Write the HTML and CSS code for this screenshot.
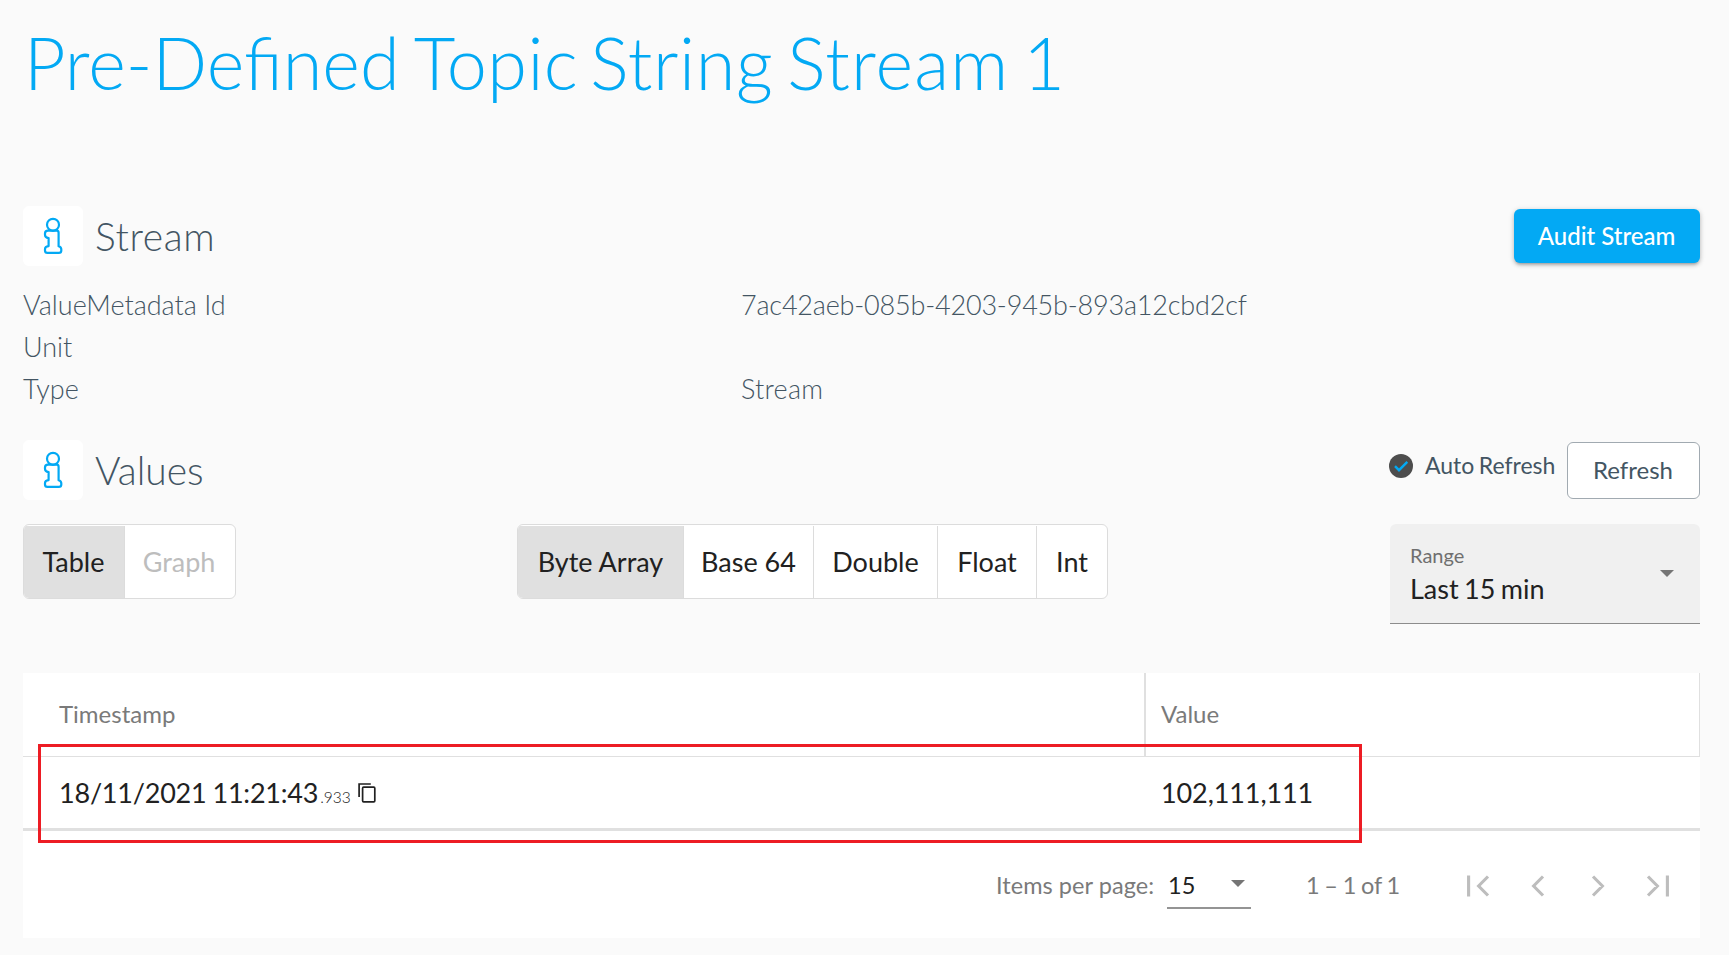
FILE: index.html
```html
<!DOCTYPE html>
<html lang="en">
<head>
<meta charset="utf-8">
<title>Pre-Defined Topic String Stream 1</title>
<link rel="stylesheet" href="styles.css">
</head>
<body>
<svg class="defs" width="0" height="0" aria-hidden="true">
  <symbol id="info" viewBox="0 0 60 60">
    <g fill="none" stroke="#03a9f4" stroke-width="2.2" stroke-linejoin="round">
      <circle cx="30" cy="18.8" r="6"/>
      <path d="M25 24.6H33.5Q35.6 24.6 35.6 26.8V40.3Q38.3 41 38.3 43.5V44.5Q38.3 46.9 35.8 46.9H24.4Q22 46.9 22 44.5V43Q22 40.5 25.6 40.1V32.2Q22 31.5 22 29V27.5Q22 24.6 25 24.6Z"/>
    </g>
  </symbol>
</svg>
<main class="page">
  <h1 class="title">Pre-Defined <span class="w-topic">Topic</span> <span class="w-string">String</span> <span class="w-stream">Stream</span> 1</h1>

  <section class="section-head">
    <svg class="tile"><use href="#info"/></svg>
    <h2 class="heading wide">Stream</h2>
    <button class="btn btn-primary">Audit Stream</button>
  </section>
  <dl class="details">
    <dt>ValueMetadata Id</dt><dd class="id">7ac42aeb-085b-4203-945b-893a12cbd2cf</dd>
    <dt>Unit</dt><dd></dd>
    <dt>Type</dt><dd class="type">Stream</dd>
  </dl>

  <section class="section-head values-head">
    <svg class="tile"><use href="#info"/></svg>
    <h2 class="heading">Values</h2>
    <label class="auto">
      <svg class="check" viewBox="0 0 24 24"><circle cx="12" cy="12" r="12" fill="#4d4d4d"/><path d="M6 12.2L10 16.2L18.3 7.9" fill="none" stroke="#03a9f4" stroke-width="2.4"/></svg>
      <span class="auto-text">Auto Refresh</span>
    </label>
    <button class="btn btn-outline">Refresh</button>
  </section>

  <section class="controls">
    <div class="toggle">
      <span class="opt opt-table on">Table</span><span class="opt opt-graph off">Graph</span>
    </div>
    <div class="toggle formats">
      <span class="opt opt-byte on">Byte Array</span><span class="opt opt-base">Base 64</span><span class="opt opt-double">Double</span><span class="opt opt-float">Float</span><span class="opt opt-int">Int</span>
    </div>
    <div class="select">
      <div class="select-text"><span class="select-label">Range</span><span class="select-value">Last 15 min</span></div>
      <span class="caret"></span>
    </div>
  </section>

  <section class="table">
    <div class="row header"><div class="cell time">Timestamp</div><div class="cell value">Value</div></div>
    <div class="row data">
      <div class="cell time"><span class="stamp">18/11/2021 11:21:43</span><span class="ms">.933</span>
        <svg class="copy" viewBox="0 0 18 20"><path d="M12.8 1H1.1V14" fill="none" stroke="#212121" stroke-width="1.7"/><rect x="4.6" y="4.2" width="12.2" height="14.6" rx="1" fill="none" stroke="#212121" stroke-width="1.7"/></svg>
      </div>
      <div class="cell value num">102,111,111</div>
    </div>
    <div class="paginator">
      <span class="per-page">Items per page:</span>
      <span class="size"><span class="size-num">15</span><span class="caret"></span></span>
      <span class="range">1 – 1 of 1</span>
      <svg class="nav" viewBox="0 0 204 24" fill="none" stroke="#bdbdbd" stroke-width="3.1">
        <path d="M2.6 1.5V22.5M22 2.5L12.6 12L22 21.5M77 2.5L67.6 12L77 21.5M127 2.5L136.4 12L127 21.5M182 2.5L191.4 12L182 21.5M201.4 1.5V22.5"/>
      </svg>
    </div>
    <div class="highlight"></div>
  </section>
</main>
</body>
</html>
```
FILE: styles.css
```css
* { box-sizing: border-box; }
body { margin: 0; background: #fafafa; font-family: Lato, "Open Sans", sans-serif; color: #212121; overflow: hidden; }
.defs { display: block; height: 0; }
.page { width: 1729px; height: 955px; padding: 0 29px 0 23px; }
.title { margin: 0; padding: 18px 0 0 1px; height: 206px; font-size: 72px; line-height: 88px; font-weight: 300; color: #03a9f4; white-space: nowrap; word-spacing: -5.5px; }
.w-topic { letter-spacing: .4px; margin-right: -2px; }
.w-string { letter-spacing: .6px; }
.w-stream { letter-spacing: 1.1px; }
.section-head { display: flex; height: 60px; align-items: flex-start; }
.tile { width: 60px; height: 60px; background: #fff; border-radius: 6px; flex: none; }
.heading { margin: 0 auto 0 12px; font-size: 39px; line-height: 60px; font-weight: 300; color: #435563; }
.wide { letter-spacing: .6px; }
.btn { font-family: inherit; border-radius: 6px; white-space: nowrap; }
.btn-primary { width: 186px; height: 54px; margin-top: 3px; padding: 0 1px 2px 0; border: 0; background: #03a9f4; color: #fff; font-size: 24px; font-weight: 500; box-shadow: 0 3px 3px -2px rgba(0,0,0,.2), 0 2px 4px rgba(0,0,0,.18), 0 1px 6px rgba(0,0,0,.12); }
.details { margin: 18px 0 0; display: grid; grid-template-columns: 718px 1fr; grid-auto-rows: 42px; font-size: 27px; line-height: 42px; font-weight: 300; color: #435563; }
.details dd { margin: 0; }
.id { letter-spacing: -.19px; }
.type { letter-spacing: .25px; }
.values-head { margin-top: 30px; }
.auto { display: flex; align-items: center; margin-top: 14px; height: 24px; font-size: 23px; color: #435563; }
.check { width: 24px; height: 24px; margin-right: 12px; }
.auto-text { width: 142px; padding-bottom: 2px; white-space: nowrap; word-spacing: -1.5px; }
.btn-outline { width: 133px; height: 57px; margin-top: 2px; padding: 0 1px 2px 0; background: #fff; border: 1px solid #a1aab1; color: #435563; font-size: 24px; }
.controls { display: flex; align-items: flex-start; margin-top: 24px; height: 149px; }
.toggle { display: flex; height: 75px; border: 1px solid #dcdcdc; border-radius: 6px; overflow: hidden; background: #fff; padding-top: 1px; font-size: 27px; line-height: 71px; }
.opt { text-align: center; white-space: nowrap; }
.opt + .opt { border-left: 1px solid #dcdcdc; }
.on { background: #e0e0e0; }
.off { color: #bdbdbd; }
.opt-table { width: 100px; padding-right: 1px; }
.opt-graph { width: 111px; padding-right: 2px; }
.formats { margin-left: 281px; }
.opt-byte { width: 165px; }
.opt-base { width: 130px; }
.opt-double { width: 124px; }
.opt-float { width: 99px; }
.opt-int { width: 71px; }
.select { display: flex; align-items: center; justify-content: space-between; width: 310px; height: 100px; margin-left: auto; padding: 0 26px 0 20px; border-radius: 6px 6px 0 0; border-bottom: 1px solid #8c8c8c; background: #f0f0f0; }
.select-text { display: flex; flex-direction: column; }
.select-label { font-size: 20px; line-height: 28px; color: #6f6f6f; padding-top: 2px; }
.select-value { font-size: 27px; line-height: 39px; word-spacing: -1.5px; }
.caret { width: 0; height: 0; border: 7.5px solid transparent; border-top-color: #757575; border-bottom: 0; }
.table { position: relative; height: 265px; background: #fff; }
.row { display: flex; }
.header { height: 84px; border-bottom: 1px solid #e0e0e0; border-right: 1px solid #e0e0e0; font-size: 24px; line-height: 82px; color: #7a7a7a; }
.cell { display: flex; align-items: center; padding-bottom: 2px; }
.data .cell { padding-bottom: 0; }
.time { width: 1123px; padding-left: 36px; }
.header .time { border-right: 2px solid #e0e0e0; }
.value { padding-left: 15px; }
.data { height: 74px; border-bottom: 3px solid #e0e0e0; font-size: 27px; line-height: 74px; }
.stamp { letter-spacing: -.22px; word-spacing: -.7px; }
.num { letter-spacing: -.1px; }
.ms { font-size: 15.5px; font-weight: 300; padding-top: 8px; margin-left: 2px; }
.copy { width: 18px; height: 20px; margin-left: 7px; }
.paginator { display: flex; align-items: center; height: 107px; padding: 3px 30px 0 973px; font-size: 23.5px; color: #7a7a7a; }
.per-page { width: 171px; padding-bottom: 3px; white-space: nowrap; letter-spacing: .05px; }
.size { display: flex; align-items: center; justify-content: space-between; width: 84px; height: 46px; padding: 0 6px 0 1px; border-bottom: 2px solid #949494; color: #212121; }
.size .caret { margin-bottom: 4px; }
.range { margin-left: 55px; padding-bottom: 3px; white-space: nowrap; word-spacing: -1.3px; }
.nav { width: 204px; height: 24px; margin-left: auto; }
.highlight { position: absolute; left: 15px; top: 71px; width: 1324px; height: 99px; border: 3px solid #ed1c24; pointer-events: none; }
```
